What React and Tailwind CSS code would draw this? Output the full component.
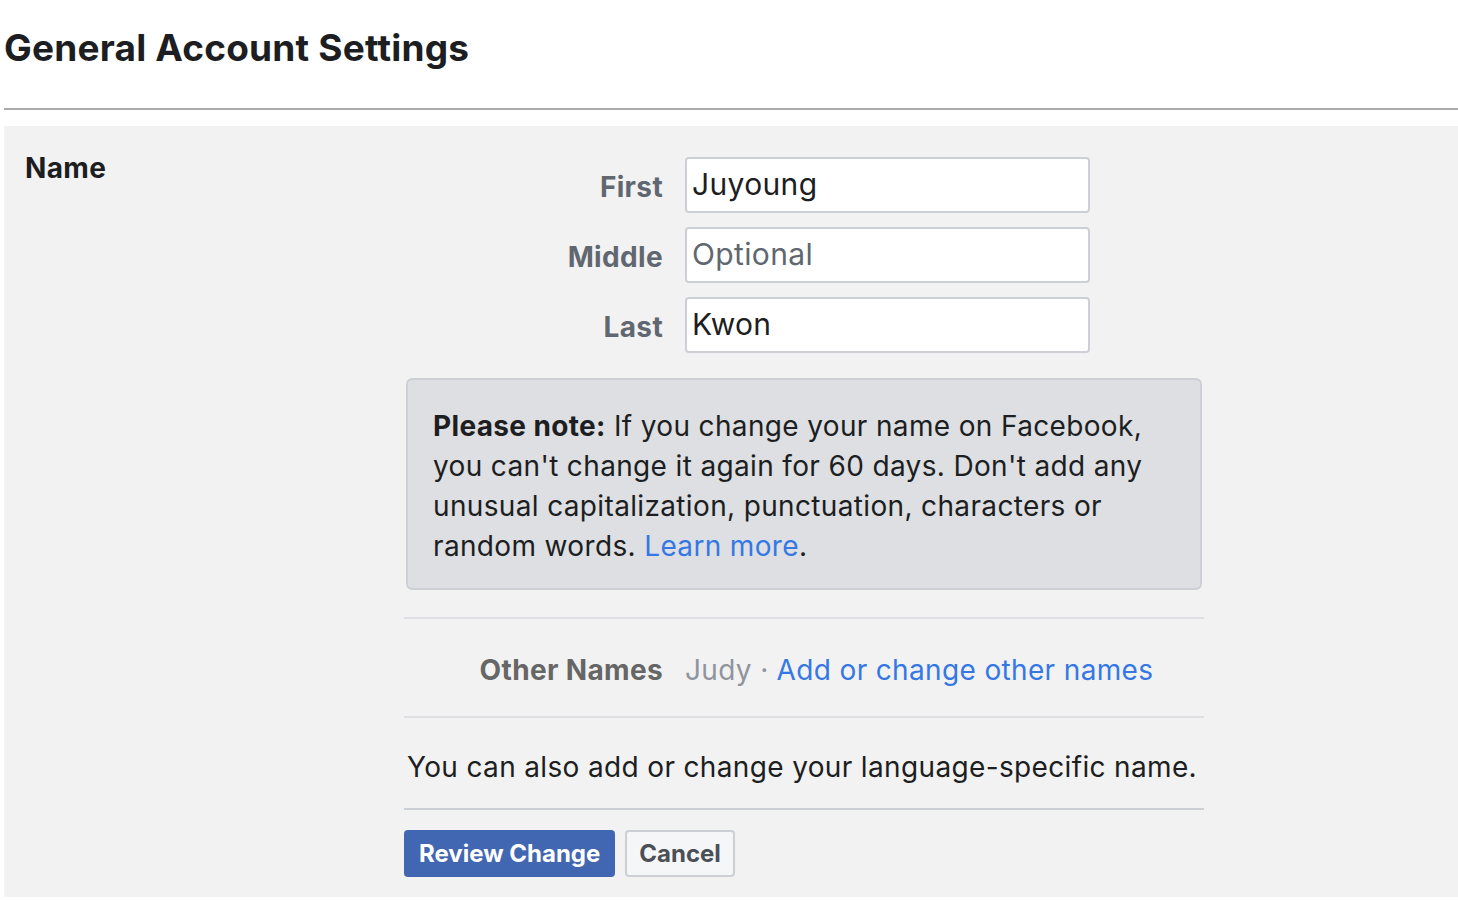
export default function App() {
  const font = { fontFamily: "Inter, 'Noto Sans', sans-serif" };
  return (
    <div className="min-h-[900px] bg-white pl-[4px] text-[#1c1e21]" style={font}>
      <header className="h-[108px] pt-[26px]">
        <h1 className="text-[37px] font-bold leading-[44px] tracking-[0.2px] text-[#1c1e21]">General Account Settings</h1>
      </header>
      <div className="h-[2px] bg-[#aaaaaa]" />
      <div className="mt-[16px] flex bg-[#f2f2f2] pb-[20px] tracking-[0.35px]">
        <div className="w-[400px] shrink-0 pl-[21px] pt-[24px]">
          <h3 className="text-[28px] font-bold leading-[36px]">Name</h3>
        </div>
        <div className="flex w-[800px] flex-col pt-[31px]">
          <div className="flex flex-col gap-[14px]">
            {[
              ["First", "Juyoung", false],
              ["Middle", "Optional", true],
              ["Last", "Kwon", false],
            ].map(([label, value, placeholder]) => (
              <div key={label} className="flex items-center">
                <label className="w-[259px] pt-[3px] text-right text-[28px] font-bold text-[#606770]">{label}</label>
                <div
                  className={`ml-[22px] flex h-[56px] w-[405px] items-center rounded-[4px] border-2 border-[#ccd0d5] bg-white pl-[5px] pb-[2px] text-[30px] ${
                    placeholder ? "text-[#606770]" : "text-[#1c1e21]"
                  }`}
                >
                  {value}
                </div>
              </div>
            ))}
          </div>

          <div className="mt-[25px] ml-[2px] w-[796px] rounded-[6px] border-2 border-[#ccd0d5] bg-[#dddfe2] px-[25px] pt-[26px] pb-[22px] text-[28px] leading-[40px] text-[#1c1e21]">
            <span className="font-bold">Please note:</span> If you change your name on Facebook, you can't change it
            again for 60 days. Don't add any unusual capitalization, punctuation, characters or random words.{" "}
            <a className="text-[#3578e5]">Learn more</a>.
          </div>

          <div className="mt-[27px] h-[2px] bg-[#dddfe2]" />
          <div className="flex h-[97px] items-center pt-[5px] text-[28px]">
            <span className="w-[259px] text-right font-bold text-[#666666]">Other Names</span>
            <span className="ml-[22px] text-[#90949c]">Judy ·</span>
            <a className="ml-[8px] text-[#3578e5]">Add or change other names</a>
          </div>
          <div className="h-[2px] bg-[#dddfe2]" />
          <p className="flex h-[90px] items-center pl-[3px] pt-[7px] text-[28px] text-[#1c1e21]">
            You can also add or change your language-specific name.
          </p>
          <div className="h-[2px] bg-[#ccd0d5]" />
          <div className="mt-[20px] flex gap-[10px] tracking-normal">
            <button className="h-[47px] rounded-[4px] bg-[#4267b2] px-[15px] text-[24px] font-bold text-white">
              Review Change
            </button>
            <button className="h-[47px] rounded-[4px] border-2 border-[#ccd0d5] bg-[#f5f6f7] px-[12px] text-[24px] font-bold text-[#4b4f56]">
              Cancel
            </button>
          </div>
        </div>
      </div>
    </div>
  );
}
